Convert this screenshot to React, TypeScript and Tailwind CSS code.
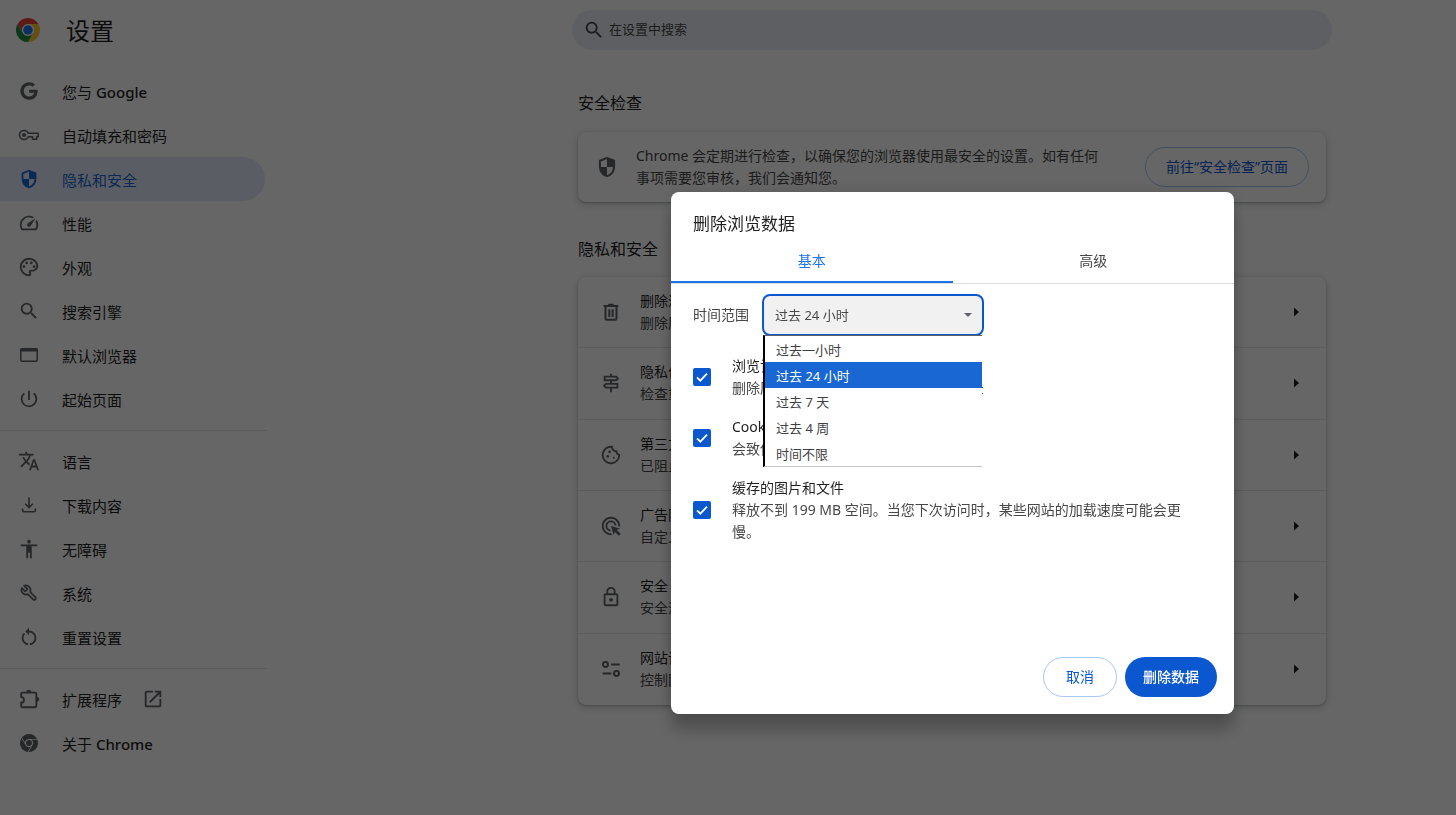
import React, { useState } from "react";
import {
  MdAdsClick,
  MdAccessibility,
  MdLockOutline,
  MdOpenInNew,
  MdOutlineCookie,
  MdOutlinePalette,
  MdOutlineSignpost,
  MdPowerSettingsNew,
  MdRestartAlt,
  MdSearch,
  MdSpeed,
  MdTranslate,
} from "react-icons/md";
import { FaGoogle } from "react-icons/fa";

type IconProps = { className?: string };

function ChromeLogo() {
  return (
    <svg viewBox="0 0 48 48" className="size-6 shrink-0" aria-hidden="true">
      <circle cx="24" cy="24" r="12" fill="#fff" />
      <path fill="#ea4335" d="M24,12H44.7812a23.9939,23.9939,0,0,0-41.5639.0029L13.6079,30l.0093-.0024A11.9852,11.9852,0,0,1,24,12Z" />
      <circle cx="24" cy="24" r="9.5" fill="#1a73e8" />
      <path fill="#fcc934" d="M34.3913,30.0029,24.0007,48A23.994,23.994,0,0,0,44.78,12.0031H23.9989l-.0025.0093A11.985,11.985,0,0,1,34.3913,30.0029Z" />
      <path fill="#1e8e3e" d="M13.6086,30.0031,3.218,12.006A23.994,23.994,0,0,0,24.0025,48L34.3931,30.0029l-.0067-.0068a11.9852,11.9852,0,0,1-20.7778.007Z" />
    </svg>
  );
}

function ChromeMono({ className }: IconProps) {
  return (
    <svg viewBox="0 0 24 24" className={className} fill="currentColor" aria-hidden="true">
      <path d="M12 0C8.21 0 4.831 1.757 2.632 4.501l3.953 6.848A5.454 5.454 0 0 1 12 6.545h10.691A12 12 0 0 0 12 0zM1.931 5.47A11.943 11.943 0 0 0 0 12c0 6.012 4.42 10.991 10.189 11.864l3.953-6.847a5.45 5.45 0 0 1-6.865-2.29zm13.342 2.166a5.446 5.446 0 0 1 1.45 7.09l.002.001h-.002l-5.344 9.257c.206.01.413.016.621.016 6.627 0 12-5.373 12-12 0-1.54-.29-3.011-.818-4.364z" />
      <circle cx="12" cy="12" r="3.9" />
    </svg>
  );
}

function Key({ className }: IconProps) {
  return (
    <svg viewBox="0 0 22 22" className={className} aria-hidden="true">
      <path
        d="M10.300 9.300h9.900v3.400h-1.500v2.600h-4.200v-2.600h-4.200a4.600 4.600 0 1 1 0-3.400z"
        fill="none"
        stroke="currentColor"
        strokeWidth="1.500"
        strokeLinejoin="round"
      />
      <circle cx="6" cy="11" r="2" fill="currentColor" />
    </svg>
  );
}

function Wrench({ className }: IconProps) {
  return (
    <svg viewBox="0 0 24 24" className={className} aria-hidden="true">
      <path
        transform="matrix(-1 0 0 1 24 0)"
        d="M14.700 6.300a1 1 0 0 0 0 1.400l1.600 1.600a1 1 0 0 0 1.400 0l3.770-3.770a6 6 0 0 1-7.940 7.940l-6.910 6.910a2.120 2.120 0 0 1-3-3l6.910-6.910a6 6 0 0 1 7.940-7.940l-3.760 3.760z"
        fill="none"
        stroke="currentColor"
        strokeWidth="2.300"
        strokeLinejoin="round"
      />
    </svg>
  );
}

function Shield({ className }: IconProps) {
  return (
    <svg viewBox="0 0 24 24" className={className} aria-hidden="true">
      <path d="M12 3L4.900 5.800v5.400c0 4.700 2.900 8.600 7.100 9.900 4.200-1.300 7.100-5.200 7.100-9.900V5.800z" fill="none" stroke="currentColor" strokeWidth="2" strokeLinejoin="round" />
      <path d="M12 3v9h7.100V5.800zM12 12v9c-3.800-1.500-6.600-4.800-7-9z" fill="currentColor" />
    </svg>
  );
}

function BrowserWindow({ className }: IconProps) {
  return (
    <svg viewBox="0 0 22 22" className={className} aria-hidden="true">
      <rect x="2.750" y="4.750" width="16.500" height="12.500" rx="1.200" fill="none" stroke="currentColor" strokeWidth="1.500" />
      <path d="M2.500 4.500h17v3h-17z" fill="currentColor" />
    </svg>
  );
}

function Download({ className }: IconProps) {
  return (
    <svg viewBox="0 0 24 24" className={className} fill="none" stroke="currentColor" strokeWidth="2.200" aria-hidden="true">
      <path d="M12 2v13M7 10.300l5 5 5-5" />
      <path d="M3.500 16.500V19a2 2 0 0 0 2 2h13a2 2 0 0 0 2-2v-2.500" />
    </svg>
  );
}

function Puzzle({ className }: IconProps) {
  return (
    <svg viewBox="0 0 24 24" className={className} aria-hidden="true">
      <path d="M3.500 6a1 1 0 0 1 1-1H19a1 1 0 0 1 1 1v14a1 1 0 0 1-1 1H4.500a1 1 0 0 1-1-1v-4a3 3 0 0 0 0-6z" fill="none" stroke="currentColor" strokeWidth="2" />
      <path d="M9 4.500a2.700 2.700 0 0 1 5.400 0zM20.500 9.700a2.700 2.700 0 0 1 0 5.400z" fill="currentColor" />
    </svg>
  );
}

function Trash({ className }: IconProps) {
  return (
    <svg viewBox="0 0 24 24" className={className} fill="none" stroke="currentColor" strokeWidth="2.200" aria-hidden="true">
      <path d="M4 5.500h16M9 4.200h6M6 5.500V19a1.500 1.500 0 0 0 1.500 1.500h9A1.500 1.500 0 0 0 18 19V5.500M10.200 9v8.500M13.800 9v8.500" />
    </svg>
  );
}

function SiteControls({ className }: IconProps) {
  return (
    <svg viewBox="0 0 24 24" className={className} fill="none" stroke="currentColor" strokeWidth="2.200" aria-hidden="true">
      <circle cx="6" cy="7" r="2.700" />
      <circle cx="18" cy="17" r="2.700" />
      <path d="M12 7h9.500M3 17h9.500" />
    </svg>
  );
}

type NavItem = {
  label: string;
  latin?: string;
  Icon: React.ComponentType<IconProps>;
  small?: boolean;
  active?: boolean;
  external?: boolean;
};

const navGroups: NavItem[][] = [
  [
    { label: "您与 ", latin: "Google", Icon: FaGoogle, small: true },
    { label: "自动填充和密码", Icon: Key },
    { label: "隐私和安全", Icon: Shield, active: true },
    { label: "性能", Icon: MdSpeed },
    { label: "外观", Icon: MdOutlinePalette },
    { label: "搜索引擎", Icon: MdSearch },
    { label: "默认浏览器", Icon: BrowserWindow },
    { label: "起始页面", Icon: MdPowerSettingsNew },
  ],
  [
    { label: "语言", Icon: MdTranslate },
    { label: "下载内容", Icon: Download, small: true },
    { label: "无障碍", Icon: MdAccessibility },
    { label: "系统", Icon: Wrench, small: true },
    { label: "重置设置", Icon: MdRestartAlt },
  ],
  [
    { label: "扩展程序", Icon: Puzzle, external: true },
    { label: "关于 ", latin: "Chrome", Icon: ChromeMono, small: true },
  ],
];

const privacyRows = [
  { title: "删除浏览数据", detail: "删除历史记录、Cookie、缓存及其他数据", Icon: Trash },
  { title: "隐私保护指南", detail: "检查重要的隐私和安全控制设置", Icon: MdOutlineSignpost },
  { title: "第三方 Cookie", detail: "已阻止无痕模式下的第三方 Cookie", Icon: MdOutlineCookie },
  { title: "广告隐私权设置", detail: "自定义网站投放广告时可使用的信息", Icon: MdAdsClick },
  { title: "安全", detail: "安全浏览（保护您免受危险网站的侵害）和其他安全设置", Icon: MdLockOutline },
  { title: "网站设置", detail: "控制网站可以使用和显示什么信息", Icon: SiteControls },
];

const ranges = ["过去一小时", "过去 24 小时", "过去 7 天", "过去 4 周", "时间不限"];

const dataTypes = [
  { id: "history", title: "浏览记录", detail: "删除历史记录，包括搜索框中的历史记录" },
  { id: "cookies", title: "Cookie 及其他网站数据", detail: "会致使您从大多数网站退出。" },
  { id: "cache", title: "缓存的图片和文件", detail: "释放不到 199 MB 空间。当您下次访问时，某些网站的加载速度可能会更慢。" },
];

const cardClass =
  "rounded-lg bg-white shadow-[0_1px_2px_rgba(60,64,67,0.3),0_2px_6px_2px_rgba(60,64,67,0.15)]";

function Sidebar() {
  return (
    <aside className="w-[448px] shrink-0">
      <div className="flex h-[60px] items-center gap-[26px] pl-4">
        <ChromeLogo />
        <h1 className="pt-[2px] text-2xl text-[#1f1f1f]">设置</h1>
      </div>
      <nav className="w-[267px] pt-[9px]">
        {navGroups.map((group, index) => (
          <ul key={index} className={index > 0 ? "mt-[9px] border-t border-[#e3e5e8] pt-2" : ""}>
            {group.map(({ label, latin, Icon, small, active, external }) => (
              <li key={label}>
                <a
                  href="#"
                  className={`mr-[2px] flex h-11 items-center rounded-r-full pl-[18px] text-[15px] ${
                    active ? "bg-[#e1eafb] text-[#1967d2]" : "text-[#1f1f1f]"
                  }`}
                >
                  <span className={`flex size-[22px] items-center justify-center ${active ? "" : "text-[#5f6368]"}`}>
                    <Icon className={small ? "size-[18px]" : "size-[22px]"} />
                  </span>
                  <span className="ml-[22px] pt-[2px] whitespace-pre">
                    {label}
                    {latin && <span className="font-medium">{latin}</span>}
                  </span>
                  {external && <MdOpenInNew className="ml-5 size-[22px] text-[#5f6368]" />}
                </a>
              </li>
            ))}
          </ul>
        ))}
      </nav>
    </aside>
  );
}

function Content() {
  return (
    <main className="flex min-w-0 flex-1 flex-col items-center pt-[10px]">
      <label className="flex h-10 w-full max-w-[760px] items-center rounded-full bg-[#e9eef6] pl-[11px]">
        <MdSearch className="size-[22px] text-[#474747]" />
        <input
          type="search"
          aria-label="在设置中搜索"
          placeholder="在设置中搜索"
          className="ml-1 flex-1 bg-transparent text-[13px] outline-none placeholder:text-[#474747]"
        />
      </label>
      <div className="w-full max-w-[748px] pt-[42px]">
        <h2 className="text-base leading-[22px] text-[#1f1f1f]">安全检查</h2>
        <section className={`mt-[18px] flex items-center py-[13px] pr-[17px] pl-[17px] ${cardClass}`}>
          <Shield className="size-6 shrink-0 text-[#5f6368]" />
          <p className="ml-[17px] flex-1 text-sm leading-[22px] text-[#474747]">
            Chrome 会定期进行检查，以确保您的浏览器使用最安全的设置。如有任何事项需要您审核，我们会通知您。
          </p>
          <button
            type="button"
            className="ml-9 h-10 shrink-0 rounded-full border border-[#a8c7fa] px-5 text-sm text-[#0b57d0]"
          >
            前往“安全检查”页面
          </button>
        </section>
        <h2 className="mt-9 text-base leading-[22px] text-[#1f1f1f]">隐私和安全</h2>
        <ul className={`mt-[17px] grid min-h-[428px] auto-rows-fr divide-y divide-[#e3e5e8] ${cardClass}`}>
          {privacyRows.map(({ title, detail, Icon }) => (
            <li key={title} className="flex">
              <a href="#" className="flex flex-1 items-center pr-[27px] pl-[22px]">
                <Icon className="size-[22px] shrink-0 text-[#5f6368]" />
                <span className="ml-[18px] flex flex-1 flex-col text-sm leading-[22px]">
                  <span className="text-[#1f1f1f]">{title}</span>
                  <span className="text-[#474747]">{detail}</span>
                </span>
                <svg viewBox="0 0 5 10" className="h-[10px] w-[5px]" aria-hidden="true">
                  <path d="M0 0.500l5 4.500-5 4.500z" fill="#1f1f1f" />
                </svg>
              </a>
            </li>
          ))}
        </ul>
      </div>
    </main>
  );
}

function RangeSelect() {
  const [range, setRange] = useState(ranges[1]);
  return (
    <div className="flex items-center">
      <label htmlFor="range" className="text-sm text-[#474747]">
        时间范围
      </label>
      <div className="relative ml-[13px]">
        <select
          id="range"
          value={range}
          onChange={(e) => setRange(e.target.value)}
          className="block h-[42px] w-[222px] appearance-none rounded-lg border-2 border-[#0b57d0] bg-[#f1f1f1] pt-[2px] pl-[11px] text-[13px] text-[#474747] outline-none"
        >
          {ranges.map((r) => (
            <option key={r}>{r}</option>
          ))}
        </select>
        <svg viewBox="0 0 8 4" className="pointer-events-none absolute top-[19px] right-3 h-1 w-2" aria-hidden="true">
          <path d="M0 0h8L4 4z" fill="#5f6368" />
        </svg>
        <ul
          role="listbox"
          aria-label="时间范围"
          className="absolute top-[41px] left-px z-10 w-[219px] border-t border-b border-l-2 border-t-[#5f6368] border-b-[#c4c7c5] border-l-black bg-white text-[13px] leading-[28px] text-[#3c4043]"
        >
          {ranges.map((r) => (
            <li
              key={r}
              role="option"
              aria-selected={r === range}
              onClick={() => setRange(r)}
              className={`h-[26px] pl-[11px] ${r === range ? "bg-[#1967d2] text-white" : ""}`}
            >
              {r}
            </li>
          ))}
        </ul>
      </div>
    </div>
  );
}

function ClearDataDialog() {
  return (
    <div className="fixed inset-0 flex items-start justify-center overflow-auto bg-black/60 pt-48 pl-[449px]">
      <div
        role="dialog"
        aria-labelledby="dialog-title"
        className="flex min-h-[522px] w-full max-w-[563px] flex-col rounded-lg bg-white shadow-[0_0_16px_rgba(0,0,0,0.12),0_16px_16px_rgba(0,0,0,0.24)]"
      >
        <h2 id="dialog-title" className="px-[22px] pt-[21px] text-[17px] leading-[22px] text-[#1f1f1f]">
          删除浏览数据
        </h2>
        <div role="tablist" className="mt-1 grid grid-cols-2 border-b border-[#dadce0] text-sm">
          <button type="button" role="tab" aria-selected="true" className="h-11 border-b-2 border-[#1a73e8] pt-[2px] text-[#1a73e8]">
            基本
          </button>
          <button type="button" role="tab" aria-selected="false" className="h-11 border-b-2 border-transparent pt-[2px] text-[#474747]">
            高级
          </button>
        </div>
        <div className="flex flex-1 flex-col px-[22px] pt-[10px]">
          <RangeSelect />
          <div className="mt-[19px] flex flex-col gap-[17px]">
            {dataTypes.map(({ id, title, detail }) => (
              <label key={id} htmlFor={id} className="flex items-center">
                <span className="relative flex size-[18px] shrink-0">
                  <input
                    id={id}
                    type="checkbox"
                    defaultChecked
                    className="peer size-[18px] appearance-none rounded-xs border-2 border-[#474747] checked:border-[#0b57d0] checked:bg-[#0b57d0]"
                  />
                  <svg viewBox="0 0 18 18" className="pointer-events-none invisible absolute inset-0 peer-checked:visible" aria-hidden="true">
                    <path d="M4 9.300l3.300 3.300L14 5.700" fill="none" stroke="#fff" strokeWidth="1.800" />
                  </svg>
                </span>
                <span className="ml-[21px] flex max-w-[460px] flex-col text-sm leading-[22px]">
                  <span className="text-[#1f1f1f]">{title}</span>
                  <span className="text-[#474747]">{detail}</span>
                </span>
              </label>
            ))}
          </div>
        </div>
        <div className="flex justify-end gap-2 p-[17px] text-sm">
          <button type="button" className="h-10 rounded-full border border-[#a8c7fa] px-[22px] text-[#0b57d0]">
            取消
          </button>
          <button type="button" className="h-10 rounded-full bg-[#0b57d0] px-[18px] font-medium text-white">
            删除数据
          </button>
        </div>
      </div>
    </div>
  );
}

export default function App() {
  return (
    <div className="flex min-h-screen bg-white font-['Noto_Sans','Noto_Sans_CJK_SC',sans-serif]">
      <Sidebar />
      <Content />
      <ClearDataDialog />
    </div>
  );
}
